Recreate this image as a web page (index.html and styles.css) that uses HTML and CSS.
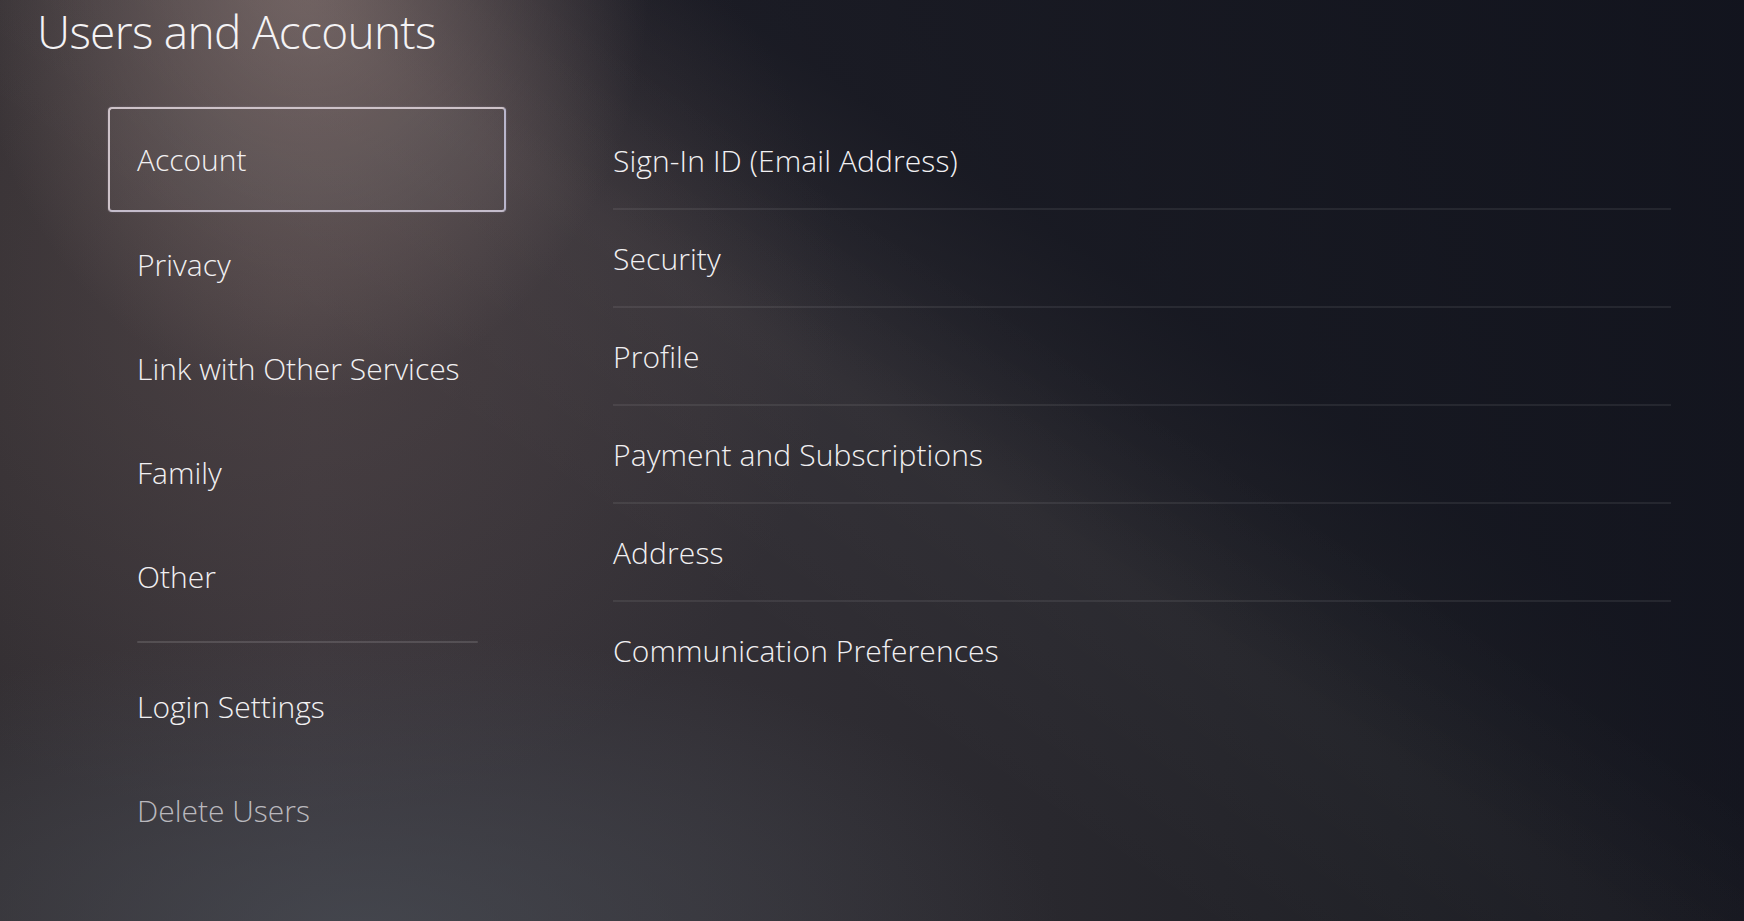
FILE: index.html
```html
<!DOCTYPE html>
<html lang="en">
<head>
<meta charset="utf-8">
<title>Users and Accounts</title>
<link rel="stylesheet" href="styles.css">
</head>
<body>
<div class="screen">
  <h1 class="title">Users and Accounts</h1>
  <div class="content">
    <nav class="side">
      <div class="side-item selected">Account</div>
      <div class="side-item">Privacy</div>
      <div class="side-item">Link with Other Services</div>
      <div class="side-item">Family</div>
      <div class="side-item">Other</div>
      <div class="side-sep"></div>
      <div class="side-item">Login Settings</div>
      <div class="side-item dim">Delete Users</div>
    </nav>
    <ul class="list">
      <li class="row">Sign-In ID (Email Address)</li>
      <li class="row">Security</li>
      <li class="row">Profile</li>
      <li class="row">Payment and Subscriptions</li>
      <li class="row">Address</li>
      <li class="row last">Communication Preferences</li>
    </ul>
  </div>
</div>
</body>
</html>
```
FILE: styles.css
```css
html, body {
  margin: 0;
  padding: 0;
}
body {
  width: 1744px;
  height: 921px;
  overflow: hidden;
  font-family: "Open Sans", "Noto Sans", "Liberation Sans", sans-serif;
  font-weight: 300;
  color: #f1f0f2;
}
.screen {
  width: 1744px;
  height: 921px;
  box-sizing: border-box;
  padding-top: 3px;
  background:
    radial-gradient(ellipse 340px 430px at 310px -30px, rgba(150, 130, 125, 0.58), rgba(150, 130, 125, 0) 100%),
    radial-gradient(ellipse 700px 300px at 360px 930px, rgba(72, 77, 85, 0.7), rgba(72, 77, 85, 0) 100%),
    radial-gradient(ellipse 560px 520px at 280px 300px, rgba(100, 84, 82, 0.4), rgba(100, 84, 82, 0) 100%),
    linear-gradient(34deg, rgba(255, 250, 250, 0) 38%, rgba(255, 250, 250, 0.025) 52%, rgba(255, 250, 250, 0) 62%),
    linear-gradient(34deg, rgba(20, 22, 32, 0) 53%, rgba(20, 22, 32, 0.45) 60%, rgba(19, 21, 31, 0.75) 67%, rgba(18, 20, 30, 0.85) 100%),
    linear-gradient(90deg, #322e32 0%, #39343a 18%, #322f35 40%, #29282e 60%, #1f2026 80%, #15161e 100%);
}
.title {
  margin: 0 0 48px 37px;
  font-size: 46px;
  font-weight: 300;
  line-height: 56px;
  letter-spacing: -0.7px;
  color: #f4f3f5;
}
.content {
  display: flex;
  padding-left: 108px;
}
.side {
  width: 398px;
  display: flex;
  flex-direction: column;
}
.side-item {
  height: 104px;
  box-sizing: border-box;
  border: 2px solid transparent;
  border-radius: 4px;
  padding-left: 27px;
  display: flex;
  align-items: center;
  font-size: 30px;
  white-space: nowrap;
}
.side-item.selected {
  height: 105px;
  border-color: #cdc2c8;
  border-right-color: #b9b6cc;
  border-bottom-color: #c4bccb;
  background: rgba(255, 255, 255, 0.025);
  box-shadow: 0 0 2px rgba(200, 190, 220, 0.35);
}
.side-item.dim {
  color: #b9b8bd;
}
.side-sep {
  height: 2px;
  margin: 13px 28px 11px 29px;
  background: rgba(255, 255, 255, 0.13);
  border-radius: 1px;
}
.list {
  list-style: none;
  margin: 5px 0 0 107px;
  padding: 0;
  width: 1058px;
}
.row {
  height: 98px;
  box-sizing: border-box;
  border-bottom: 2px solid rgba(255, 255, 255, 0.075);
  display: flex;
  align-items: center;
  font-size: 30px;
  letter-spacing: 0.1px;
  white-space: nowrap;
}
.row.last {
  border-bottom-color: transparent;
}
```
